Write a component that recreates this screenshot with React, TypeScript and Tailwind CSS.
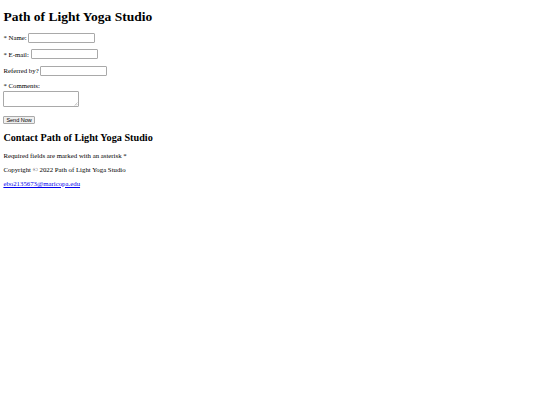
export default function App() {
  return (
    <div className="min-h-[405px] bg-white px-[3.4px] pt-px font-['Liberation_Serif',serif] text-[6.8px] leading-[7.8px] text-black">
      <h1 className="mt-[7.6px] mb-[8.9px] text-[13.5px] leading-[15.5px] font-bold">Path of Light Yoga Studio</h1>
      <form>
        <p className="mb-[6.5px] flex items-center h-[10px]">
          <label>* Name:</label>
          <input type="text" className="ml-[1.7px] h-[10px] w-[67px] rounded-[1px] border border-[#a9a9a9] bg-white" />
        </p>
        <p className="mb-[6.5px] flex items-center h-[10px]">
          <label>* E-mail:</label>
          <input type="text" className="ml-[1.7px] h-[10px] w-[67px] rounded-[1px] border border-[#a9a9a9] bg-white" />
        </p>
        <p className="mb-[6.5px] flex items-center h-[10px]">
          <label>Referred by?</label>
          <input type="text" className="ml-[1.7px] h-[10px] w-[67px] rounded-[1px] border border-[#a9a9a9] bg-white" />
        </p>
        <div>
          <label className="block">* Comments:</label>
          <div className="relative mt-px w-[76px]">
            <textarea className="block h-[15.5px] w-[76px] resize-none rounded-[1px] border border-[#a9a9a9] bg-white" />
            <svg className="absolute right-[1px] bottom-[1px]" width="4" height="4" viewBox="0 0 4 4">
              <path d="M0.5 3.5 L3.5 0.5 M2 3.5 L3.5 2" stroke="#999" strokeWidth="0.5" />
            </svg>
          </div>
        </div>
        <div className="mt-[9.2px]">
          <button type="button" className="block h-[8px] rounded-[1px] border border-[#a9a9a9] bg-[#efefef] px-[2px] font-['Liberation_Sans',sans-serif] text-[5.5px] leading-[6px]">
            Send Now
          </button>
        </div>
      </form>
      <h2 className="mt-[8px] mb-[8.3px] text-[10.2px] leading-[11.7px] font-bold">Contact Path of Light Yoga Studio</h2>
      <p className="mb-[6.2px]">Required fields are marked with an asterisk *</p>
      <p className="mb-[6.2px]">Copyright © 2022 Path of Light Yoga Studio</p>
      <p>
        <a href="#" className="text-[#0000ee] underline">ebo2135673@maricopa.edu</a>
      </p>
    </div>
  )
}
